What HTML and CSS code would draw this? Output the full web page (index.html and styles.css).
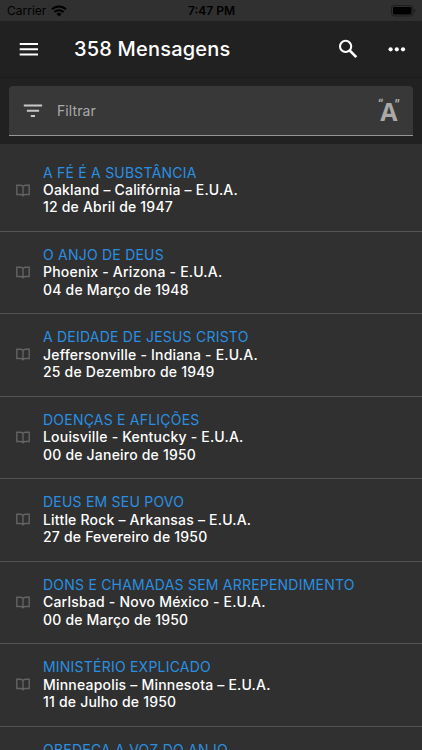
FILE: index.html
```html
<!DOCTYPE html>
<html lang="pt">
<head>
    <meta charset="utf-8">
    <title>Mensagens</title>
    <link rel="stylesheet" href="styles.css">
</head>
<body>
    <div class="status-bar">
        <div class="carrier">
            <span>Carrier</span>
            <svg class="wifi" viewBox="0 0 16 12">
                <path d="M1 4.4a10 10 0 0 1 14 0M3.4 7a6.6 6.6 0 0 1 9.2 0" fill="none" stroke="#000" stroke-width="2"/>
                <path d="M8 11.6L5.4 9a3.7 3.7 0 0 1 5.2 0z"/>
            </svg>
        </div>
        <div class="time">7:47 PM</div>
        <div class="battery">
            <svg viewBox="0 0 25 12">
                <rect x=".5" y=".5" width="21.5" height="10.5" rx="2.8" fill="none" stroke="#1c1c1c"/>
                <rect x="2" y="2" width="18.5" height="7.5" rx="1.4"/>
                <path d="M23.3 4v3.6a2 2 0 0 0 0-3.6z" fill="#1c1c1c"/>
            </svg>
        </div>
    </div>

    <div class="toolbar">
        <svg class="menu" viewBox="0 0 20 14">
            <path d="M.7 2h18.3M.7 7.2h18.3M.7 12.4h18.3" stroke="#fff" stroke-width="2"/>
        </svg>
        <h1>358 Mensagens</h1>
        <svg class="search" viewBox="0 0 20 20">
            <circle cx="7.6" cy="7.4" r="5.6" fill="none" stroke="#fff" stroke-width="2.1"/>
            <path d="M11.6 11.4l6.7 6.7" stroke="#fff" stroke-width="2.7"/>
        </svg>
        <svg class="more" viewBox="0 0 18 6">
            <circle cx="2.6" cy="3.3" r="2.1"/>
            <circle cx="8.8" cy="3.3" r="2.1"/>
            <circle cx="15" cy="3.3" r="2.1"/>
        </svg>
    </div>

    <div class="filter-wrap">
        <div class="filter">
            <svg viewBox="0 0 20 14">
                <path d="M.8 1.5h18.3M3.9 6.7h12.2M7.8 11.9h4.2" stroke="#c8c8c8" stroke-width="2"/>
            </svg>
            <span class="placeholder">Filtrar</span>
            <span class="match-case"><i>“</i><b>A</b><i>”</i></span>
        </div>
    </div>

    <div class="list" id="list"></div>

    <script>
        const messages = [
            ['A FÉ É A SUBSTÂNCIA', 'Oakland – Califórnia – E.U.A.', '12 de Abril de 1947'],
            ['O ANJO DE DEUS', 'Phoenix - Arizona - E.U.A.', '04 de Março de 1948'],
            ['A DEIDADE DE JESUS CRISTO', 'Jeffersonville - Indiana - E.U.A.', '25 de Dezembro de 1949'],
            ['DOENÇAS E AFLIÇÕES', 'Louisville - Kentucky - E.U.A.', '00 de Janeiro de 1950'],
            ['DEUS EM SEU POVO', 'Little Rock – Arkansas – E.U.A.', '27 de Fevereiro de 1950'],
            ['DONS E CHAMADAS SEM ARREPENDIMENTO', 'Carlsbad - Novo México - E.U.A.', '00 de Março de 1950'],
            ['MINISTÉRIO EXPLICADO', 'Minneapolis – Minnesota – E.U.A.', '11 de Julho de 1950'],
            ['OBEDEÇA A VOZ DO ANJO']
        ];

        document.getElementById('list').innerHTML = messages.map(m => `
            <div class="item">
                <svg class="book" viewBox="0 0 14 13">
                    <path d="M7 2.4Q5.8 1.3 4 1.3H.8v9.2H4.600Q6 10.500 7 11.700Q8 10.500 9.400 10.500H13.200V1.300H10Q8.200 1.300 7 2.400zV11.500"/>
                </svg>
                <div class="text">
                    <div class="title">${m[0]}</div>
                    ${m.slice(1).map(line => `<div>${line}</div>`).join('')}
                </div>
            </div>
        `).join('');
    </script>
</body>
</html>
```

FILE: styles.css
```css
body {
    margin: 0;
    height: 750px;
    overflow: hidden;
    display: flex;
    flex-direction: column;
    background: #303030;
    color: #fff;
    font-family: Inter, "Liberation Sans", sans-serif;
}

svg {
    display: block;
    flex: none;
}

.status-bar {
    display: grid;
    grid-template-columns: 1fr auto 1fr;
    align-items: center;
    flex: none;
    height: 21px;
    padding: 0 6px 0 7px;
    box-sizing: border-box;
    color: #000;
    font-size: 12px;
}

.carrier {
    display: flex;
    align-items: center;
    gap: 5px;
}

.wifi {
    width: 16px;
    height: 12px;
}

.time {
    font-weight: 600;
}

.battery svg {
    width: 25px;
    height: 12px;
    margin-left: auto;
}

.toolbar {
    display: flex;
    align-items: center;
    flex: none;
    height: 57px;
    padding: 0 16px 0 19px;
    box-sizing: border-box;
    background: #212121;
    border-bottom: 1px solid #1b1b1b;
}

.menu {
    width: 20px;
    height: 14px;
}

h1 {
    flex: 1;
    margin: 0 0 0 35px;
    font-size: 20px;
    font-weight: 500;
    letter-spacing: 0.2px;
}

.search {
    width: 20px;
    height: 20px;
    margin-right: 30px;
}

.more {
    width: 18px;
    height: 6px;
    fill: #fff;
}

.filter-wrap {
    flex: none;
    height: 66px;
    padding: 8px 9px 0;
    box-sizing: border-box;
    background: #212121;
}

.filter {
    display: flex;
    align-items: center;
    height: 50px;
    padding: 0 13px 0 14px;
    box-sizing: border-box;
    background: #383838;
    border-bottom: 1px solid #969696;
    border-radius: 4px 4px 0 0;
}

.filter svg {
    width: 20px;
    height: 14px;
}

.placeholder {
    flex: 1;
    margin-left: 14px;
    color: #a9a9a9;
    font-size: 14px;
    letter-spacing: 0.1px;
}

.match-case {
    display: flex;
    align-items: flex-start;
    color: #a9a9a9;
    font-family: Roboto, sans-serif;
}

.match-case b {
    margin: 0 -3px;
    font-family: "Open Sans", sans-serif;
    font-size: 25px;
    line-height: 26px;
}

.match-case i {
    font-size: 14px;
    font-style: normal;
    font-weight: 500;
    line-height: 15px;
}

.list {
    flex: 1;
    min-height: 0;
    overflow: hidden;
    padding-top: 5.5px;
}

.item {
    height: 82.45px;
    display: flex;
    padding: 14.1px 16px 0;
    box-sizing: border-box;
    border-bottom: 1px solid #545454;
}

.book {
    width: 14px;
    height: 13px;
    margin: 20px 13px 0 0;
    fill: none;
    stroke: #636363;
    stroke-width: 1.4;
}

.text {
    font-size: 14px;
    font-weight: 500;
    line-height: 17.4px;
    letter-spacing: 0.2px;
    white-space: nowrap;
}

.title {
    color: #2a8fe0;
    font-weight: 400;
    letter-spacing: 0.22px;
}
```
